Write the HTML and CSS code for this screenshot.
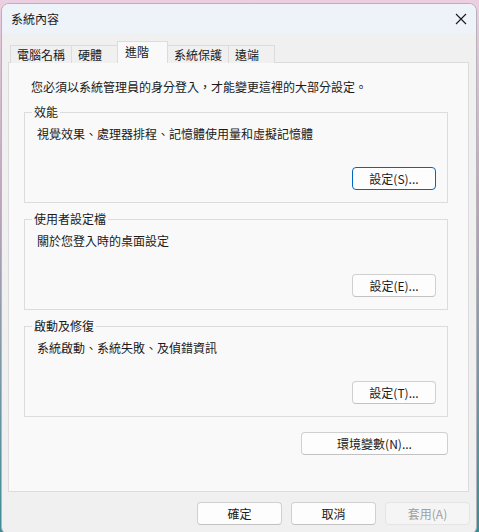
FILE: index.html
```html
<!DOCTYPE html>
<html lang="zh-Hant">
<head>
<meta charset="utf-8">
<title>系統內容</title>
<link rel="stylesheet" href="styles.css">
</head>
<body>
<div class="window">
  <div class="titlebar">
    <span class="title">系統內容</span>
    <svg class="close" width="12" height="12" viewBox="0 0 12 12"><path d="M1 1 L11 11 M11 1 L1 11" stroke="#1a1a1a" stroke-width="1.1" fill="none"/></svg>
  </div>
  <div class="client">
    <div class="tabs">
      <div class="tab">電腦名稱</div>
      <div class="tab">硬體</div>
      <div class="tab selected">進階</div>
      <div class="tab">系統保護</div>
      <div class="tab">遠端</div>
    </div>
    <div class="panel">
      <p class="note">您必須以系統管理員的身分登入，才能變更這裡的大部分設定。</p>
      <fieldset class="group">
        <legend>效能</legend>
        <p class="desc">視覺效果、處理器排程、記憶體使用量和虛擬記憶體</p>
        <div class="btn-row"><button class="btn focus">設定(S)...</button></div>
      </fieldset>
      <fieldset class="group">
        <legend>使用者設定檔</legend>
        <p class="desc">關於您登入時的桌面設定</p>
        <div class="btn-row"><button class="btn">設定(E)...</button></div>
      </fieldset>
      <fieldset class="group">
        <legend>啟動及修復</legend>
        <p class="desc">系統啟動、系統失敗、及偵錯資訊</p>
        <div class="btn-row"><button class="btn">設定(T)...</button></div>
      </fieldset>
      <div class="env-row"><button class="btn wide">環境變數(N)...</button></div>
    </div>
    <div class="footer">
      <button class="btn dlg">確定</button>
      <button class="btn dlg">取消</button>
      <button class="btn dlg disabled">套用(A)</button>
    </div>
  </div>
</div>
</body>
</html>
```
FILE: styles.css
```css
* { box-sizing: border-box; }
html, body { height: 100%; }
body {
  margin: 0;
  background: linear-gradient(180deg, #eccfe0 0%, #b9a3b8 40%, #3a8d96 100%);
  font-family: "Noto Sans CJK TC", "Liberation Sans", sans-serif;
  font-size: 12px;
  line-height: 16px;
  color: #1a1a1a;
  overflow: hidden;
}
.window {
  margin: 3px 3px 0 1px;
  width: 476px;
  height: 532px;
  border: 1px solid #b4b4b8;
  border-radius: 8px;
  background: #f0f0f0;
  overflow: hidden;
}
.titlebar {
  height: 29px;
  background: #eef2f9;
  display: flex;
  align-items: center;
  justify-content: space-between;
  padding: 0 8px 0 9px;
}
.title { font-size: 12px; line-height: 16px; padding-top: 1px; }
.close { display: block; margin-right: 1px; }
.client {
  padding: 8px 7px 0 6px;
}
.tabs {
  display: flex;
  align-items: flex-end;
  padding-left: 2px;
  height: 22px;
  position: relative;
  z-index: 1;
  margin-bottom: -1px;
}
.tab {
  height: 18px;
  padding: 0 6px;
  min-width: 47px;
  border: 1px solid #dcdcdc;
  border-bottom: none;
  margin-right: -1px;
  background: #f0f0f0;
  line-height: 17px;
  white-space: nowrap;
}
.tab.selected {
  height: 22px;
  min-width: 51px;
  background: #f9f9f9;
  line-height: 19px;
  padding-left: 7px;
  z-index: 2;
  position: relative;
}
.panel {
  height: 430px;
  border: 1px solid #dcdcdc;
  background: #f9f9f9;
  padding: 16px 20px 0 15px;
}
.note {
  margin: 0 0 9px 7px;
}
.group {
  margin: 0 0 8px 0;
  border: 1px solid #dcdcdc;
  padding: 0 11px 12px 12px;
  min-width: 0;
}
.group legend {
  padding: 0 2px;
  margin-left: -5px;
  line-height: 16px;
}
.desc {
  margin: 6px 0 0 0;
}
.btn-row {
  display: flex;
  justify-content: flex-end;
  margin-top: 25px;
}
.btn {
  font-family: "Noto Sans CJK TC", "Liberation Sans", sans-serif;
  font-size: 12px;
  line-height: 16px;
  color: #1a1a1a;
  height: 23px;
  width: 84px;
  padding: 0;
  background: #fdfdfd;
  border: 1px solid #d0d0d0;
  border-bottom-color: #c2c2c2;
  border-radius: 4px;
}
.btn.focus {
  border: 1px solid #0067c0;
  box-shadow: inset 0 0 0 1px #ffffff;
}
.env-row {
  display: flex;
  justify-content: flex-end;
  margin-top: 15px;
}
.btn.wide { width: 147px; }
.footer {
  display: flex;
  justify-content: flex-end;
  gap: 9px;
  margin: 10px -1px 0 0;
}
.btn.dlg { width: 85px; height: 23px; }
.btn.disabled {
  color: #a0a0a0;
  background: #f5f5f5;
  border-color: #e5e5e5;
}
```
